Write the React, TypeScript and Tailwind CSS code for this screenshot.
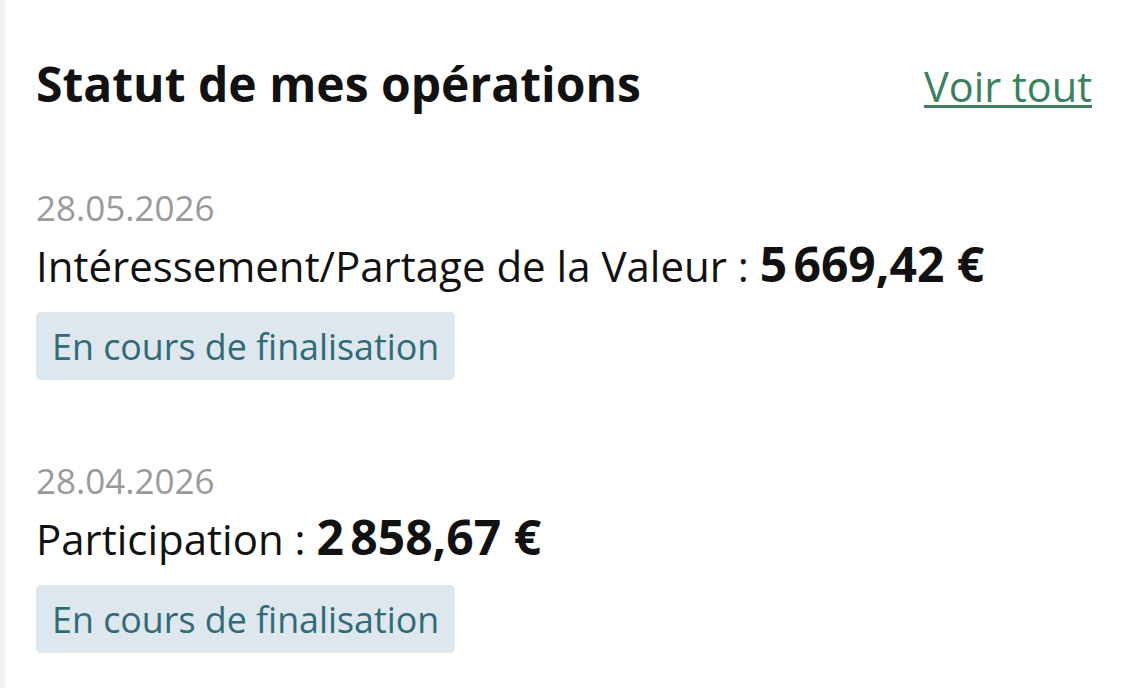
import * as React from 'react';

interface Operation {
  date: string;
  label: string;
  amount: string;
  status: string;
}

const operations: Operation[] = [
  {
    date: '28.05.2026',
    label: 'Intéressement/Partage de la Valeur',
    amount: '5\u202F669,42\u00A0€',
    status: 'En cours de finalisation',
  },
  {
    date: '28.04.2026',
    label: 'Participation',
    amount: '2\u202F858,67\u00A0€',
    status: 'En cours de finalisation',
  },
];

const OperationItem: React.FC<{ op: Operation }> = ({ op }) => (
  <div className="flex flex-col items-start">
    <div className="text-[35px] leading-[48px] text-[#9a9a9a]">{op.date}</div>
    <div className="mt-[6px] text-[42px] leading-[52px] text-[#111]">
      {op.label} : <span className="text-[48px] font-bold">{op.amount}</span>
    </div>
    <div className="mt-[20px] rounded-[5px] bg-[#dde7ed] px-[16px] py-[10px] text-[35.8px] leading-[48px] text-[#2f6c78]">
      {op.status}
    </div>
  </div>
);

export default function App() {
  return (
    <div
      className="flex h-[688px] w-[1121px] bg-white"
      style={{ fontFamily: '"Open Sans", "Noto Sans", sans-serif' }}
    >
      <div className="w-[5px] shrink-0 bg-[#f3f3f3]" />
      <div className="flex flex-1 flex-col pl-[31px] pr-[29px] pt-[55px]">
        <div className="flex items-baseline justify-between">
          <h2 className="text-[48px] font-bold leading-[58px] text-[#111]">
            Statut de mes opérations
          </h2>
          <a
            href="#"
            className="text-[41.5px] leading-[58px] text-[#3b8160] underline decoration-[2.5px] underline-offset-[3px]"
          >
            Voir tout
          </a>
        </div>
        <div className="mt-[69px] flex flex-col gap-[77px]">
          {operations.map((op) => (
            <OperationItem key={op.date} op={op} />
          ))}
        </div>
      </div>
    </div>
  );
}
